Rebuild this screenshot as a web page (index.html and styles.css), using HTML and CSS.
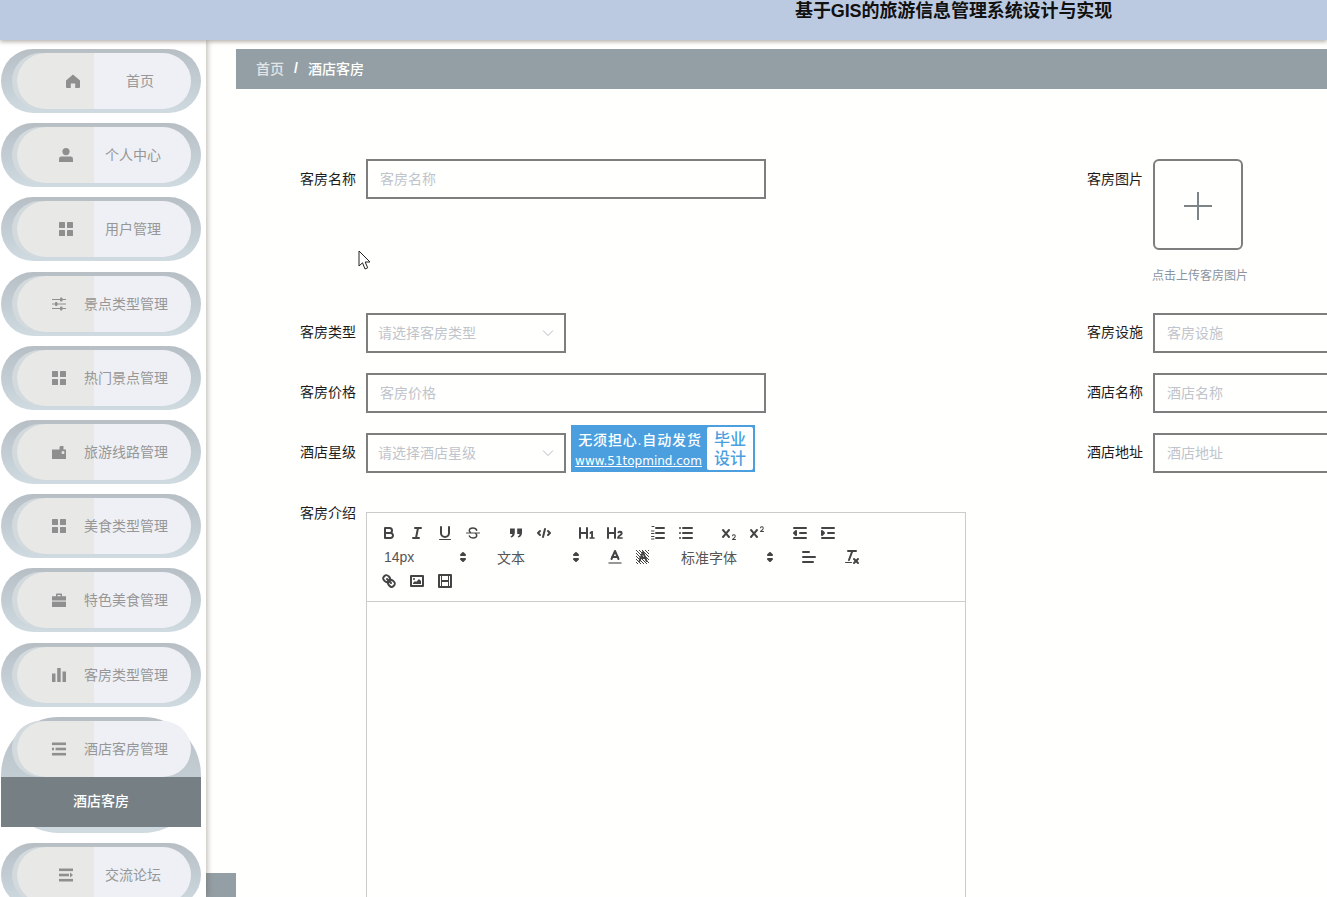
FILE: index.html
```html
<!DOCTYPE html>
<html lang="zh-CN">
<head>
<meta charset="utf-8">
<title>基于GIS的旅游信息管理系统设计与实现</title>
<link rel="stylesheet" href="styles.css">
</head>
<body>
<svg class="defs" width="0" height="0" aria-hidden="true">
  <symbol id="i-home" viewBox="0 0 14 14"><path d="M7 .6 14 6.6V13a1 1 0 0 1-1 1H9.2V9.6H4.8V14H1a1 1 0 0 1-1-1V6.6Z"/></symbol>
  <symbol id="i-user" viewBox="0 0 14 14"><circle cx="7" cy="3.6" r="3.6"/><path d="M2.4 8.6h9.2A2.4 2.4 0 0 1 14 11v3H0v-3a2.4 2.4 0 0 1 2.4-2.4Z"/></symbol>
  <symbol id="i-grid" viewBox="0 0 14 14"><rect width="6" height="6" rx=".6"/><rect x="8" width="6" height="6" rx=".6"/><rect y="8" width="6" height="6" rx=".6"/><rect x="8" y="8" width="6" height="6" rx=".6"/></symbol>
  <symbol id="i-sliders" viewBox="0 0 14 14"><path d="M0 2h14v1H0ZM0 6.500h14v1H0ZM0 11h14v1H0Z"/><rect x="8" y=".6" width="2.500" height="3.800" rx="1"/><rect x="3" y="5.100" width="2.500" height="3.800" rx="1"/><rect x="8" y="9.600" width="2.500" height="3.800" rx="1"/></symbol>
  <symbol id="i-wallet" viewBox="0 0 14 14"><path fill-rule="evenodd" d="M0 4.500 7.500 4.500V2.400Q7.500 1 9 1h2.500v3.500H14V14H0ZM9.500 7.500a1.500 1.500 0 1 0 3 0 1.500 1.500 0 1 0-3 0Z"/></symbol>
  <symbol id="i-case" viewBox="0 0 14 14"><path fill-rule="evenodd" d="M4 3.200V1.400Q4 .6 4.800 .6h4.400q.8 0 .8 .8v1.800h4V7.600H0V3.200ZM5.500 2.100v1.100h3V2.100Z"/><path d="M0 8.600h14V14H0Z"/></symbol>
  <symbol id="i-bars" viewBox="0 0 14 14"><rect y="5.500" width="3.500" height="8.500"/><rect x="5.200" width="3.500" height="14"/><rect x="10.500" y="3.500" width="3.500" height="10.500"/></symbol>
  <symbol id="i-list" viewBox="0 0 14 14"><rect y=".5" width="14" height="2.600"/><rect x="3.500" y="5.700" width="10.500" height="2.600"/><rect y="10.900" width="14" height="2.600"/><rect y="5.700" width="2" height="2.600"/></symbol>
  <symbol id="i-forum" viewBox="0 0 14 14"><rect y=".5" width="14" height="2.600"/><rect y="5.700" width="10" height="2.600"/><rect y="10.900" width="14" height="2.600"/><path d="M11 4.600 14 7 11 9.400Z"/></symbol>

  <symbol id="q-arrow" viewBox="0 0 18 18"><polygon class="qf qs" points="7 11 9 13 11 11 7 11"/><polygon class="qf qs" points="7 7 9 5 11 7 7 7"/></symbol>
</svg>

<header class="topbar"><h1 class="title">基于GIS的旅游信息管理系统设计与实现</h1></header>

<div class="layout">
  <nav class="sidebar">
    <div class="item n2"><div class="pill"><svg class="nav-icon"><use href="#i-home"/></svg><span>首页</span></div></div>
    <div class="item n4"><div class="pill"><svg class="nav-icon"><use href="#i-user"/></svg><span>个人中心</span></div></div>
    <div class="item n4"><div class="pill"><svg class="nav-icon"><use href="#i-grid"/></svg><span>用户管理</span></div></div>
    <div class="item n6"><div class="pill"><svg class="nav-icon"><use href="#i-sliders"/></svg><span>景点类型管理</span></div></div>
    <div class="item n6"><div class="pill"><svg class="nav-icon"><use href="#i-grid"/></svg><span>热门景点管理</span></div></div>
    <div class="item n6"><div class="pill"><svg class="nav-icon"><use href="#i-wallet"/></svg><span>旅游线路管理</span></div></div>
    <div class="item n6"><div class="pill"><svg class="nav-icon"><use href="#i-grid"/></svg><span>美食类型管理</span></div></div>
    <div class="item n6"><div class="pill"><svg class="nav-icon"><use href="#i-case"/></svg><span>特色美食管理</span></div></div>
    <div class="item n6"><div class="pill"><svg class="nav-icon"><use href="#i-bars"/></svg><span>客房类型管理</span></div></div>
    <div class="item n6 open">
      <div class="pill"><svg class="nav-icon"><use href="#i-list"/></svg><span>酒店客房管理</span></div>
      <div class="sub">酒店客房</div>
    </div>
    <div class="item n4"><div class="pill"><svg class="nav-icon"><use href="#i-forum"/></svg><span>交流论坛</span></div></div>
  </nav>

  <div class="gutter"><div class="gutter-strip"></div></div>

  <main class="content">
    <div class="crumbs"><span class="crumb-home">首页</span><span class="crumb-sep">/</span><span class="crumb-now">酒店客房</span></div>

    <form class="form">
      <div class="field"><label class="lbl">客房名称</label><input class="ctl wide" placeholder="客房名称"></div>
      <div class="field">
        <label class="lbl">客房图片</label>
        <div class="upload-wrap">
          <div class="upload"><svg width="28" height="28" viewBox="0 0 28 28"><path d="M0 14h28M14 0v28" stroke="#7d8487" stroke-width="2" fill="none"/></svg></div>
          <div class="upload-help">点击上传客房图片</div>
        </div>
      </div>

      <div class="field"><label class="lbl">客房类型</label><div class="ctl sel"><span>请选择客房类型</span><svg class="chev" width="12" height="12" viewBox="0 0 12 12"><path d="M1 3.500 6 8.500 11 3.500"/></svg></div></div>
      <div class="field"><label class="lbl">客房设施</label><input class="ctl wide" placeholder="客房设施"></div>

      <div class="field"><label class="lbl">客房价格</label><input class="ctl wide" placeholder="客房价格"></div>
      <div class="field"><label class="lbl">酒店名称</label><input class="ctl wide" placeholder="酒店名称"></div>

      <div class="field">
        <label class="lbl">酒店星级</label><div class="ctl sel"><span>请选择酒店星级</span><svg class="chev" width="12" height="12" viewBox="0 0 12 12"><path d="M1 3.500 6 8.500 11 3.500"/></svg></div>
        <div class="ad">
          <div class="ad-left"><div class="ad-main">无须担心.自动发货</div><div class="ad-url">www.51topmind.com</div></div>
          <div class="ad-right">毕业<br>设计</div>
        </div>
      </div>
      <div class="field"><label class="lbl">酒店地址</label><input class="ctl wide" placeholder="酒店地址"></div>

      <div class="field editor-field">
        <label class="lbl lbl-top">客房介绍</label>
        <div class="editor">
          <div class="toolbar">
            <div class="tb-group">
              <button type="button" class="tb"><svg viewBox="0 0 18 18"><path class="qs" d="M5,4H9.5A2.5,2.5,0,0,1,12,6.500v0A2.500,2.500,0,0,1,9.500,9H5V4Z"/><path class="qs" d="M5,9h5.500A2.500,2.500,0,0,1,13,11.500v0A2.500,2.500,0,0,1,10.500,14H5V9Z"/></svg></button>
              <button type="button" class="tb"><svg viewBox="0 0 18 18"><line class="qs" x1="7" x2="13" y1="4" y2="4"/><line class="qs" x1="5" x2="11" y1="14" y2="14"/><line class="qs" x1="8" x2="10" y1="14" y2="4"/></svg></button>
              <button type="button" class="tb"><svg viewBox="0 0 18 18"><path class="qs" d="M5,3V9a4,4,0,0,0,4,4H9a4,4,0,0,0,4-4V3"/><rect class="qf" height="1" rx=".5" width="12" x="3" y="15"/></svg></button>
              <button type="button" class="tb"><svg viewBox="0 0 18 18"><line class="qs thin" x1="2.500" x2="15.500" y1="9" y2="9"/><path class="qs mid" d="M12.700 6.200C12.200 4.700 10.700 4 9 4 7 4 5.300 5 5.300 6.600 5.300 7.400 5.700 8 6.400 8.400M11.700 9.700C12.300 10.100 12.700 10.700 12.700 11.600 12.700 13.100 11 14 9 14 7.200 14 5.800 13.300 5.300 12"/></svg></button>
            </div>
            <div class="tb-group">
              <button type="button" class="tb"><svg viewBox="0 0 18 18"><path class="qf" d="M3 4.500h4.800v4.200c0 2.600-1.500 4.300-3.700 4.900l-.6-1.200c1.100-.5 1.800-1.300 1.900-2.400H3Z"/><path class="qf" d="M10.200 4.500H15v4.200c0 2.600-1.500 4.300-3.700 4.900l-.6-1.200c1.100-.5 1.800-1.300 1.900-2.400h-2.400Z"/></svg></button>
              <button type="button" class="tb"><svg viewBox="0 0 18 18"><polyline class="qs" points="5 7 3 9 5 11"/><polyline class="qs" points="13 7 15 9 13 11"/><line class="qs" x1="10" x2="8" y1="5" y2="13"/></svg></button>
            </div>
            <div class="tb-group">
              <button type="button" class="tb"><svg viewBox="0 0 18 18"><path class="qf" d="M10,4V14a1,1,0,0,1-2,0V10H3v4a1,1,0,0,1-2,0V4A1,1,0,0,1,3,4V8H8V4a1,1,0,0,1,2,0Zm6.068,9.209H14.990V7.599a.541.541,0,0,0-.605-.605h-.627a1.011,1.011,0,0,0-.748.297L11.645,8.566a.544.544,0,0,0-.022.858l.286.308a.539.539,0,0,0,.847.033l.099-.088a1.214,1.214,0,0,0,.242-.353h.022s-.011.309-.011.605V13.209H12.041a.541.541,0,0,0-.605.605v.440a.541.541,0,0,0,.605.605h4.027a.541.541,0,0,0,.605-.605v-.440A.541.541,0,0,0,16.068,13.209Z"/></svg></button>
              <button type="button" class="tb"><svg viewBox="0 0 18 18"><path class="qf" d="M16.740,13.814v.440a.541.541,0,0,1-.605.605H11.855a.584.584,0,0,1-.649-.605V14.013c0-2.905,3.399-3.422,3.399-4.555a.777.777,0,0,0-.847-.781,1.177,1.177,0,0,0-.836.385c-.275.264-.561.374-.858.132l-.429-.341c-.308-.242-.385-.518-.154-.814a2.972,2.972,0,0,1,2.454-1.177,2.454,2.454,0,0,1,2.684,2.409c0,2.453-3.179,2.927-3.278,3.938h2.794A.541.541,0,0,1,16.740,13.814ZM9,3A1,1,0,0,0,8,4V8H3V4A1,1,0,0,0,1,4V14a1,1,0,0,0,2,0V10H8v4a1,1,0,0,0,2,0V4A1,1,0,0,0,9,3Z"/></svg></button>
            </div>
            <div class="tb-group">
              <button type="button" class="tb"><svg viewBox="0 0 18 18"><line class="qs" x1="7" x2="15" y1="4" y2="4"/><line class="qs" x1="7" x2="15" y1="9" y2="9"/><line class="qs" x1="7" x2="15" y1="14" y2="14"/><line class="qs thin" x1="3" x2="5" y1="2.500" y2="2.500"/><line class="qs thin" x1="2.500" x2="5" y1="7" y2="7"/><line class="qs thin" x1="2.500" x2="5" y1="9.500" y2="9.500"/><line class="qs thin" x1="2.500" x2="5" y1="12.500" y2="12.500"/><line class="qs thin" x1="2.500" x2="5" y1="15" y2="15"/></svg></button>
              <button type="button" class="tb"><svg viewBox="0 0 18 18"><line class="qs" x1="6" x2="15" y1="4" y2="4"/><line class="qs" x1="6" x2="15" y1="9" y2="9"/><line class="qs" x1="6" x2="15" y1="14" y2="14"/><line class="qs" x1="3" x2="3" y1="4" y2="4"/><line class="qs" x1="3" x2="3" y1="9" y2="9"/><line class="qs" x1="3" x2="3" y1="14" y2="14"/></svg></button>
            </div>
            <div class="tb-group">
              <button type="button" class="tb"><svg viewBox="0 0 18 18"><path class="qf" d="M15.500,15H13.861a3.858,3.858,0,0,0,1.914-2.975,1.800,1.800,0,0,0-1.600-1.751A1.921,1.921,0,0,0,12.021,11.700a.5.5,0,1,0,.957.291.914.914,0,0,1,1.053-.725.810.810,0,0,1,.744.762c0,1.076-1.170,1.870-1.940,2.431A1.456,1.456,0,0,0,12,15.500a.5.5,0,0,0,.5.5h3A.5.5,0,0,0,15.500,15Z"/><path class="qf" d="M9.650,5.241a1,1,0,0,0-1.409.108L6,7.964,3.759,5.349A1,1,0,0,0,2.241,6.651L4.684,9.500,2.241,12.350A1,1,0,0,0,3.759,13.650L6,11.036,8.241,13.650a1,1,0,1,0,1.518-1.300L7.316,9.500,9.759,6.651A1,1,0,0,0,9.650,5.241Z"/></svg></button>
              <button type="button" class="tb"><svg viewBox="0 0 18 18"><path class="qf" d="M15.500,7H13.861a4.015,4.015,0,0,0,1.914-2.975,1.800,1.800,0,0,0-1.600-1.751A1.922,1.922,0,0,0,12.021,3.700a.5.5,0,1,0,.957.291.917.917,0,0,1,1.053-.725.810.810,0,0,1,.744.762c0,1.077-1.164,1.925-1.934,2.486A1.423,1.423,0,0,0,12,7.500a.5.5,0,0,0,.5.5h3A.5.5,0,0,0,15.500,7Z"/><path class="qf" d="M9.650,5.241a1,1,0,0,0-1.409.108L6,7.964,3.759,5.349A1,1,0,0,0,2.241,6.651L4.684,9.500,2.241,12.350A1,1,0,0,0,3.759,13.650L6,11.036,8.241,13.650a1,1,0,1,0,1.518-1.300L7.316,9.500,9.759,6.651A1,1,0,0,0,9.650,5.241Z"/></svg></button>
            </div>
            <div class="tb-group">
              <button type="button" class="tb"><svg viewBox="0 0 18 18"><line class="qs" x1="3" x2="15" y1="14" y2="14"/><line class="qs" x1="3" x2="15" y1="4" y2="4"/><line class="qs" x1="9" x2="15" y1="9" y2="9"/><polyline class="qs qf" points="5 7 5 11 3 9 5 7"/></svg></button>
              <button type="button" class="tb"><svg viewBox="0 0 18 18"><line class="qs" x1="3" x2="15" y1="14" y2="14"/><line class="qs" x1="3" x2="15" y1="4" y2="4"/><line class="qs" x1="9" x2="15" y1="9" y2="9"/><polyline class="qs qf" points="3 7 3 11 5 9 3 7"/></svg></button>
            </div>

            <div class="tb-group">
              <div class="picker p98"><span>14px</span><svg class="picker-arrow"><use href="#q-arrow"/></svg></div>
            </div>
            <div class="tb-group">
              <div class="picker p98"><span>文本</span><svg class="picker-arrow"><use href="#q-arrow"/></svg></div>
            </div>
            <div class="tb-group">
              <button type="button" class="tb"><svg viewBox="0 0 18 18"><line class="qs thin2" x1="3" x2="15" y1="15" y2="15"/><polyline class="qs" points="5.500 11 9 3 12.500 11"/><line class="qs" x1="11.630" x2="6.380" y1="9" y2="9"/></svg></button>
              <button type="button" class="tb"><svg viewBox="0 0 18 18"><defs><pattern id="hatch" width="3" height="3" patternUnits="userSpaceOnUse"><rect width="1" height="1" fill="#444"/><rect x="1" y="1" width="1" height="1" fill="#444"/><rect x="2" y="2" width="1" height="1" fill="#444"/></pattern></defs><rect x="2" y="2" width="13" height="14" fill="url(#hatch)"/><polyline class="qs" points="5.500 13 9 4 12.500 13"/><line class="qs" x1="11.630" x2="6.380" y1="10" y2="10"/></svg></button>
            </div>
            <div class="tb-group">
              <div class="picker p108"><span>标准字体</span><svg class="picker-arrow"><use href="#q-arrow"/></svg></div>
            </div>
            <div class="tb-group">
              <button type="button" class="tb"><svg viewBox="0 0 18 18"><line class="qs" x1="3" x2="15" y1="9" y2="9"/><line class="qs" x1="3" x2="13" y1="14" y2="14"/><line class="qs" x1="3" x2="9" y1="4" y2="4"/></svg></button>
            </div>
            <div class="tb-group">
              <button type="button" class="tb"><svg viewBox="0 0 18 18"><line class="qs" x1="5" x2="13" y1="3" y2="3"/><line class="qs" x1="6" x2="9.350" y1="12" y2="3"/><line class="qs" x1="11" x2="15" y1="11" y2="15"/><line class="qs" x1="15" x2="11" y1="11" y2="15"/><rect class="qf" height="1" rx=".5" width="7" x="2" y="14"/></svg></button>
            </div>

            <div class="tb-group tb-last">
              <button type="button" class="tb"><svg viewBox="0 0 18 18"><line class="qs" x1="7" x2="11" y1="7" y2="11"/><path class="qs" d="M8.900,4.577a3.476,3.476,0,0,1,.36,4.679A3.476,3.476,0,0,1,4.577,8.900C3.185,7.500,2.035,6.400,4.217,4.217S7.500,3.185,8.900,4.577Z"/><path class="qs" d="M13.423,9.100a3.476,3.476,0,0,0-4.679-.36,3.476,3.476,0,0,0,.36,4.679c1.392,1.392,2.500,2.542,4.679.36S14.815,10.500,13.423,9.100Z"/></svg></button>
              <button type="button" class="tb"><svg viewBox="0 0 18 18"><rect class="qs" height="10" width="12" x="3" y="4"/><circle class="qf" cx="6" cy="7" r="1"/><polyline class="qf" points="5 12 5 11 7 9 8 10 11 7 13 9 13 12 5 12"/></svg></button>
              <button type="button" class="tb"><svg viewBox="0 0 18 18"><rect class="qs" height="12" width="12" x="3" y="3"/><rect class="qf" height="12" width="1" x="5" y="3"/><rect class="qf" height="12" width="1" x="12" y="3"/><rect class="qf" height="2" width="8" x="5" y="8"/></svg></button>
            </div>
          </div>
          <div class="editor-body"></div>
        </div>
      </div>
    </form>
  </main>
</div>

<svg class="cursor" width="14" height="21" viewBox="0 0 14 21"><path d="M1 1V16L4.500 12.800 7 19 9.700 17.800 7.200 12H12Z" fill="#fff" stroke="#222" stroke-width="1"/></svg>
</body>
</html>
```

FILE: styles.css
```css
* { box-sizing: border-box; }
html, body { margin: 0; height: 897px; overflow: hidden; }
body {
  position: relative;
  display: flex;
  flex-direction: column;
  background: #fffffd;
  font-family: "Liberation Sans", "Noto Sans CJK SC", sans-serif;
  font-size: 14px;
  color: #1c1c1c;
}
.defs { position: absolute; }

/* Top bar */
.topbar {
  position: relative;
  z-index: 3;
  flex: none;
  height: 40px;
  padding: 1px 0 0 795px;
  background: #bccae1;
  box-shadow: 0 2px 4px rgba(80, 70, 60, .4);
}
.title { margin: 0; font-size: 18px; line-height: 20px; font-weight: 700; letter-spacing: -.1px; color: #111; }

.layout { flex: 1; min-height: 0; display: flex; }

/* Sidebar */
.sidebar {
  position: relative;
  z-index: 2;
  flex: none;
  width: 206px;
  padding: 9px 5px 0 1px;
  background: #fff;
  box-shadow: 2px 0 5px rgba(90, 80, 70, .35);
  overflow: hidden;
  color: #979797;
}
.item {
  height: 64px;
  margin-bottom: 10.2px;
  padding: 4px 0;
  border-radius: 32px;
  background: linear-gradient(#b7bfc5, #c3ced4 55%, #d0dbe1);
}
.pill {
  display: flex;
  align-items: center;
  height: 56px;
  margin: 0 10px 0 16px;
  border-radius: 28px;
  background: linear-gradient(to right, #e8e8e6 77px, #eef0f5 77px);
  box-shadow: -5px 0 0 #d3dade;
}
.pill span { padding-bottom: 2px; }
.nav-icon { flex: none; width: 14px; height: 14px; fill: #8f8f8f; }
.n2 .nav-icon { margin: 0 46px 0 49px; }
.n4 .nav-icon { margin: 0 32px 0 42px; }
.n6 .nav-icon { margin: 0 18px 0 35px; }

.item.open {
  height: 116px;
  margin-bottom: 10px;
  padding: 4px 0 6px;
  border-radius: 60px;
}
.sub {
  height: 50px;
  padding-bottom: 2px;
  line-height: 48px;
  text-align: center;
  background: #767f83;
  color: #fff;
  font-weight: 500;
}

/* Gutter */
.gutter { flex: none; width: 30px; display: flex; align-items: flex-end; }
.gutter-strip { width: 100%; height: 24px; background: #949fa5; }

/* Content */
.content { flex: 1; min-width: 0; padding-top: 9px; overflow: hidden; }
.crumbs {
  display: flex;
  align-items: center;
  height: 40px;
  padding: 0 0 2px 20px;
  background: #949fa5;
  color: #fff;
}
.crumb-home { color: #e2e5e7; font-weight: 500; }
.crumb-sep { width: 24px; text-align: center; color: #fff; font-weight: 700; }
.crumb-now { font-weight: 500; }

.form {
  display: grid;
  grid-template-columns: 787px 466px;
  grid-template-rows: 134px 40px 40px 40px auto;
  row-gap: 20px;
  padding: 70px 0 0 64px;
}
.field { display: flex; align-items: flex-start; }
.lbl { flex: none; width: 56px; margin-right: 10px; line-height: 40px; white-space: nowrap; }
.field:nth-child(n+3) .lbl { line-height: 38px; }

.ctl {
  height: 40px;
  border: 2px solid #7e7e7e;
  background: #fffffd;
  font: inherit;
  outline: none;
}
.wide { width: 400px; padding: 0 12px; }
.wide::placeholder { color: #c0c4cc; opacity: 1; }
.sel {
  display: flex;
  align-items: center;
  justify-content: space-between;
  width: 200px;
  padding: 0 10px;
  color: #c0c4cc;
}
.sel span { padding-bottom: 2px; }
.chev { fill: none; stroke: #b4b8c0; stroke-width: 1; }

/* Upload */
.upload {
  display: flex;
  align-items: center;
  justify-content: center;
  width: 90px;
  height: 91px;
  padding-top: 3px;
  border: 2px solid #7e7e7e;
  border-radius: 6px;
}
.upload-help { margin-top: 18px; margin-left: -1px; font-size: 12px; line-height: 17px; color: #8a94a3; white-space: nowrap; }

/* Advert */
.ad {
  flex: none;
  display: flex;
  width: 184px;
  height: 47px;
  margin: -8px 0 0 5px;
  padding: 2px;
  background: #4b9fdf;
}
.ad-left { flex: none; width: 134px; color: #fff; text-align: center; }
.ad-main { padding-top: 1px; font-size: 14px; line-height: 25px; font-weight: 500; letter-spacing: .85px; white-space: nowrap; }
.ad-url { margin-left: -3px; font-family: "DejaVu Sans", sans-serif; font-size: 12px; line-height: 17px; text-decoration: underline; white-space: nowrap; }
.ad-right {
  flex: 1;
  padding-top: 3px;
  border-radius: 2px;
  background: #fff;
  color: #4b9fdf;
  font-size: 16px;
  font-weight: 500;
  line-height: 19px;
  text-align: center;
}

/* Editor */
.editor-field { grid-column: 1 / -1; margin-top: 12px; }
.editor-field .lbl.lbl-top { line-height: 16px; }
.editor { flex: none; width: 600px; margin-top: 7px; }
.toolbar {
  display: flex;
  flex-wrap: wrap;
  height: 90px;
  padding: 8px;
  border: 1px solid #ccc;
  color: #444;
}
.tb-group { display: flex; margin-right: 15px; }
.tb-last { flex-basis: 100%; }
.tb { width: 28px; height: 24px; padding: 3px 5px; border: 0; background: none; }
.tb svg { display: block; width: 18px; height: 18px; }
.qs { fill: none; stroke: #444; stroke-width: 2; stroke-linecap: round; stroke-linejoin: round; }
.qs.thin { stroke-width: 1; }
.qs.mid { stroke-width: 1.500; }
.qs.thin2 { stroke-width: 1.500; stroke: #777; }
.qf { fill: #444; }
.qs.qf { fill: #444; }

.picker {
  display: flex;
  align-items: center;
  justify-content: space-between;
  height: 24px;
  padding: 0 1px 1px 9px;
  color: #555;
}
.p98 { width: 98px; }
.p108 { width: 108px; }
.picker-arrow { width: 18px; height: 18px; }
.editor-body { height: 600px; border: 1px solid #ccc; border-top: 0; }

/* Screen capture pointer */
.cursor { position: absolute; left: 358px; top: 250px; z-index: 5; }
```
